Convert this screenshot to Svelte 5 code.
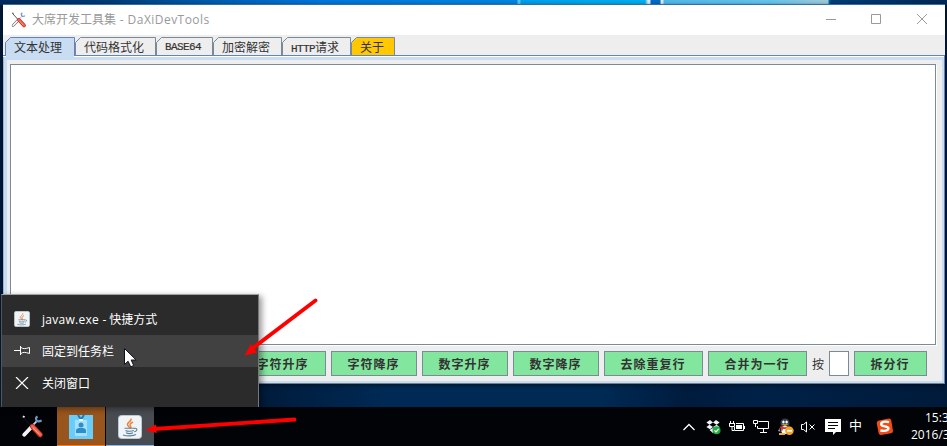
<script>
  const tabs = [
    { label: '文本处理', width: 70, kind: 'selected' },
    { label: '代码格式化', width: 81, kind: '' },
    { label: 'BASE64', width: 57, kind: 'latin' },
    { label: '加密解密', width: 69, kind: '' },
    { label: 'HTTP请求', latin: 'HTTP', rest: '请求', width: 69, kind: '' },
    { label: '关于', width: 44, kind: 'about' }
  ];
  const actions = ['字符升序', '字符降序', '数字升序', '数字降序', '去除重复行', '合并为一行'];
</script>

{#snippet tools(cls)}
  <svg class={cls} viewBox="0 0 24 24">
    <path d="M2 1.5l2 1" stroke="#eee" stroke-width="2" fill="none" class="tip" />
    <path d="M3 3l9 10" stroke="#333" stroke-width="1.3" fill="none" class="shaft" />
    <path d="M3.500 21.500L12.500 12" stroke="#333" stroke-width="4.200" stroke-linecap="round" class="edge" />
    <path d="M3.500 21.500L12.500 12" stroke="#f3f3f3" stroke-width="3" stroke-linecap="round" />
    <path d="M13 11l4-4" stroke="#c5d0dc" stroke-width="2" />
    <path d="M18 1.500c-3 2-1.500 7.500 4.500 4.500" fill="none" stroke="#6f9ac8" stroke-width="2.200" />
    <path d="M12.500 12.500l8.500 9" stroke="#b92c20" stroke-width="5.600" stroke-linecap="round" />
    <path d="M12.500 12.500l8.500 9" stroke="#ee6550" stroke-width="3.600" stroke-linecap="round" />
    <path d="M13 14l7 7" stroke="#ffac98" stroke-width="1" />
  </svg>
{/snippet}

{#snippet java(cls)}
  <svg class={cls} viewBox="0 0 24 24">
    <rect x=".5" y=".5" width="23" height="23" rx="3" fill="#f1f4f6" stroke="#b8cad8" />
    <path d="M13 3.500c1.500 3-5.500 4-3.200 7 .8 1 1.800 1.600 1.800 2.800M15 7c-2.800 1.400-4 2.500-2.400 4.200.8 1 .3 1.700-.3 2.300" fill="none" stroke="#ee8036" stroke-width="1.400" />
    <path d="M6.500 13.200h10M7.500 15.500c1.500 1 6.500 1 8.300 0M8 17.700c2 1 5 1 7 0M5 20c4 1.300 10 1.200 13-.4M16 13.500c4-1.200 3.500 2.800.2 3.200" fill="none" stroke="#5e829c" stroke-width="1.100" />
  </svg>
{/snippet}

<div class="desktop">
  <section class="window">
    <header>
      {@render tools('app-icon')}
      <h1>大席开发工具集 <span>- DaXiDevTools</span></h1>
      <svg class="controls" width="104" height="12" viewBox="0 0 104 12" fill="none" stroke="#999">
        <path d="M0 5.500h10M45.500 .5h9v9h-9zM91 0l10 10M101 0L91 10" />
      </svg>
    </header>
    <nav>
      {#each tabs as tab}
        <div class="tab {tab.kind}" style:width="{tab.width}px">
          <svg class="shape" width={tab.width} height="18" viewBox="0 0 {tab.width} 18">
            <path d="M.5 19V5.500L5.500 .5H{tab.width - 0.5}V19" />
          </svg>
          {#if tab.latin}
            <b><i>{tab.latin}</i>{tab.rest}</b>
          {:else}
            <b>{tab.label}</b>
          {/if}
        </div>
      {/each}
    </nav>
    <main>
      <div class="textarea"></div>
      <div class="actions">
        {#each actions as action}<button class:wide={action.length === 5}>{action}</button>{/each}
        <label>按</label>
        <div class="field"></div>
        <button class="split">拆分行</button>
      </div>
    </main>
  </section>

  <footer>
    <div class="task plain">{@render tools('tool-icon')}</div>
    <div class="task badge">
      <svg width="24" height="24" viewBox="0 0 24 24">
        <path fill="#69cdfc" d="M0 0h24v24H0z" />
        <path d="M9 0l3 4.500L15 0" stroke="#237bad" stroke-width="2" fill="none" />
        <path fill="#a5e1ff" d="M6 5h12v16H6z" />
        <path fill="#f4fbff" d="M10 4h4v2h-4z" />
        <circle cx="12" cy="10" r="2.500" fill="#2d8ec9" />
        <path d="M7 18v-2.500c0-2 2-2.500 5-2.500s5 .5 5 2.500V18z" fill="#2d8ec9" />
      </svg>
    </div>
    <div class="task javatask">{@render java('java-big')}</div>
    <div class="tray">
      <svg width="12" height="16" viewBox="0 0 12 16" fill="none" stroke="#fff" stroke-width="1.300"><path d="M.5 11L6 5.500l5.500 5.500" /></svg>
      <svg width="15" height="16" viewBox="0 0 15 16" class="drop">
        <path fill="#f1f5f8" d="M4 1l3 2.400-3.500 2.300L.4 3.500zM10 1l3.600 2.500-3 2.200L7 3.400zM3.500 5.700L7 8l-3 2.300L.4 8zM10.600 5.700L13.600 8 10 10.300 7 8zM3.500 11L7 9l3.500 2L7 14z" />
        <circle cx="10.500" cy="11.300" r="4" fill="#27ae43" />
        <path d="M8.500 11.300l1.500 1.500 2.700-3" fill="none" stroke="#fff" stroke-width="1.200" />
      </svg>
      <svg width="16" height="16" viewBox="0 0 16 16" class="battery">
        <path d="M1.500 2v2M4.500 2v2M0 4.500h6M.5 5v2.500h5V5M3 8v3.500h2M7 4.500h7.500v7h-9V8M15.500 7v3" fill="none" stroke="#fff" />
        <path fill="#fff" d="M7 6h6v4H7z" />
      </svg>
      <svg width="17" height="16" viewBox="0 0 17 16" class="network">
        <path d="M5.500 3.500h10v7h-11V8M10.500 11v3M7 14.500h7M.5 2.500h4v3h-4zM2.500 6v3" fill="none" stroke="#fff" />
      </svg>
      <svg width="16" height="18" viewBox="0 0 16 18" class="qq">
        <path fill="#a8b2bc" d="M3 8L0 13l4 1z" />
        <ellipse cx="7" cy="11" rx="5.500" ry="5.500" fill="#20252a" />
        <circle cx="7" cy="5" r="4.600" fill="#35404a" />
        <ellipse cx="7" cy="12" rx="3.700" ry="4" fill="#fff" />
        <ellipse cx="5.400" cy="4" rx="1.200" ry="1.500" fill="#fff" /><ellipse cx="8.600" cy="4" rx="1.200" ry="1.500" fill="#fff" />
        <path fill="#f5ae27" d="M3.500 6.300h7L7 8zM1 15h6v2H1z" />
        <path d="M2.500 9c3 1.500 6 1.500 9 0M4 9.500v3" fill="none" stroke="#e2352c" stroke-width="1.700" />
        <circle cx="11.400" cy="12.800" r="4.300" fill="#f6a62c" /><path d="M9 12.800h5" stroke="#fff" stroke-width="1.600" />
      </svg>
      <svg width="15" height="16" viewBox="0 0 15 16" fill="none" stroke="#fff" class="volume">
        <path d="M.5 5.500h2L5.500 3v10l-3-2.500h-2zM8.500 5.500l5 5M13.500 5.500l-5 5" />
      </svg>
      <svg width="16" height="16" viewBox="0 0 16 16" class="note">
        <path fill="#fff" d="M0 0h16v13h-5l-3 3v-3H0z" /><path d="M3 3.500h10M3 6.500h10M3 9.500h7" stroke="#05070c" />
      </svg>
      <span class="ime">中</span>
      <svg width="17" height="17" viewBox="0 0 17 17" class="sogou">
        <path fill="#f24b17" d="M3 2.500L13 .5q2 0 2.300 2L17 13q0 2-2 2.300L5 17q-2 0-2.400-2L.7 5Q.6 3 3 2.500z" />
        <path d="M13 4.200C9 3 5 4 5.200 6.300c.2 2.700 7.200 1.400 7.200 4 0 2.500-4.400 3.200-8 2.100" fill="none" stroke="#fff" stroke-width="2.400" />
      </svg>
      <div class="clock"><span>15:3</span><span>2016/3</span></div>
    </div>
  </footer>

  <aside>
    <div class="item">{@render java('java-small')}<span><em>javaw.exe -</em> 快捷方式</span></div>
    <div class="item hover">
      <svg width="16" height="12" viewBox="0 0 16 12" fill="none" stroke="#fff"><path d="M0 5.500h6M6.500 1v9M7 2.500c2 1.500 4 1.500 8.500 0v6c-4.500-1.500-6.500-1.500-8.500 0" /></svg>
      <span>固定到任务栏</span>
    </div>
    <div class="item">
      <svg width="16" height="12" viewBox="0 0 16 12" fill="none" stroke="#fff" stroke-width="1.200"><path d="M2 0l12 12M14 0L2 12" /></svg>
      <span>关闭窗口</span>
    </div>
  </aside>

  <svg class="overlay" width="947" height="446" viewBox="0 0 947 446">
    <g fill="red" stroke="red">
      <path d="M315.500 300.500L253 348M294.500 419.500L154 429" stroke-width="3.800" stroke-linecap="round" />
      <path stroke="none" d="M244.500 355.500l6.500-11.500 6 8.500zM145 430l11-5.500.8 8.500z" />
    </g>
    <path d="M124.500 348.500v16l3.600-3.300 2.600 5.600 3-1.300-2.500-5.500h5z" fill="#fff" stroke="#101018" />
  </svg>
</div>

<style>
  :global(body) { margin: 0; }
  .desktop {
    position: relative; width: 947px; height: 446px; overflow: hidden;
    font: 12px/16px 'Noto Sans', 'Noto Sans CJK SC', sans-serif;
    background:
      linear-gradient(90deg, #002b5c 0, #003b78 110px, #005cae 210px, #0076dc 320px, #0085e3 517px, #55c5f4 518px 520px, #009fec 521px, #00afef 645px, #d9edf5 648px 650px, #006ac8 651px 660px, #d9edf5 661px 663px, #4eb9ec 664px, #66c4ee 770px, #a0cbdc 828px, #0074a9 829px, #003d78 831px, #002856 947px) 0 0 / 100% 5px no-repeat,
      linear-gradient(90deg, #001a39, #001b3b 260px, #002a55 390px, #002a54 600px, #001b3d 690px, #002147 760px, #001a3a);
  }
  .window {
    position: absolute; left: 3px; top: 4px; width: 942px; height: 380px; box-sizing: border-box;
    display: flex; flex-direction: column; background: #eee; border-top: 1px solid #386f9e;
    box-shadow: 0 1px 4px #0008;
  }
  header { height: 30px; background: #fff; display: flex; align-items: center; flex: none; }
  :global(.app-icon) { width: 15px; height: 15px; margin: -1px 0 0 8px; overflow: visible; }
  header :global(.tip) { stroke: #333; }
  .plain :global(.shaft) { stroke: #0d1015; }
  .plain :global(.edge) { stroke: #f3f3f3; }
  h1 { margin: 0 0 1px 6px; font: 12px/16px 'Noto Sans CJK SC', sans-serif; color: #999; flex: 1; white-space: nowrap; }
  h1 span { font-family: 'Open Sans', sans-serif; letter-spacing: .46px; margin-left: 1px; }
  .controls { margin-right: 15px; margin-top: -1px; }
  nav { display: flex; flex: none; height: 18px; padding: 2px 0 0 2px; }
  .tab { position: relative; height: 18px; color: #333; text-align: left; }
  .shape { position: absolute; inset: 0; fill: #eee; stroke: #7a8a99; }
  .tab b { position: relative; display: block; padding-left: 9px; line-height: 20px; font-weight: 400; font-family: 'Noto Sans CJK SC', sans-serif; white-space: nowrap; }
  .tab.latin b, .tab i { font-family: 'Liberation Mono', monospace; font-style: normal; font-size: 11px; letter-spacing: -.6px; -webkit-text-stroke: .2px #333; }
  .tab.latin b { line-height: 21px; }
  .selected { z-index: 1; }
  .selected .shape { height: 22px; fill: #c8ddf2; stroke: #6382bf; overflow: visible; }
  .selected::after { content: ''; position: absolute; left: 1px; right: 1px; top: 17px; height: 4px; background: #c8ddf2; }
  .selected .shape { height: 18px; overflow: hidden; }
  .about .shape { fill: #ffc800; }
  main {
    flex: 1; box-sizing: border-box; border: solid #6382bf; border-width: 1px 1px 1px 0;
    border-bottom-color: #6d8191;
    box-shadow: inset 0 1px #fff, inset 1px 0 #9db6d5, inset 0 4px #c8ddf2, inset 4px 0 #c8ddf2, inset -2px -2px #c8ddf2;
    padding: 8px 8px 0 7px; display: flex; flex-direction: column;
  }
  .textarea { height: 279px; border: 1px solid #7a8a99; background: #fff; box-shadow: 1px 1px #fff; }
  .actions { display: flex; gap: 5px; margin: 6px 0 0 230px; height: 25px; }
  button {
    width: 86px; height: 25px; padding: 0 1px 0 0; box-sizing: border-box; border: 1px solid #7a8a99; border-radius: 0;
    background: #82e69e; color: #333; font: bold 12px/20px 'Noto Sans CJK SC', sans-serif; letter-spacing: 1px; flex: none;
  }
  .wide { width: 99px; }
  .split { width: 73px; }
  label { width: 12px; line-height: 26px; color: #333; font-family: 'Noto Sans CJK SC', sans-serif; }
  .field { width: 20px; height: 25px; box-sizing: border-box; border: 1px solid #7a8a99; background: #fff; }
  footer { position: absolute; left: 0; right: 0; bottom: 0; height: 39px; background: #010307; display: flex; }
  .task { height: 39px; box-sizing: border-box; width: 48px; display: flex; justify-content: center; padding-top: 8px; margin-right: 1px; }
  .plain { width: 56px; padding-left: 7px; }
  .badge { background: #98551e; border-bottom: 1px solid #ff7b10; }
  .javatask { background: #484b50; border-bottom: 1px solid #83baf0; }
  :global(.tool-icon) { width: 22px; height: 22px; overflow: visible; }
  :global(.java-big) { width: 24px; height: 24px; }
  :global(.java-small) { width: 16px; height: 16px; }
  .tray { display: flex; align-items: center; margin-left: auto; width: 264px; color: #fff; flex: none; }
  .tray svg { flex: none; }
  .drop { margin-left: 11px; }
  .battery { margin-left: 8px; }
  .network { margin-left: 8px; margin-top: -1px; }
  .qq { margin-left: 8px; }
  .volume { margin-left: 7px; }
  .note { margin-left: 9px; margin-top: 1px; }
  .ime { width: 13px; margin: -3px 0 0 8px; font: 400 13px/16px 'Noto Sans CJK SC', sans-serif; }
  .sogou { margin-left: 14px; }
  .clock { display: flex; flex-direction: column; width: 60px; margin-left: 18px; flex: none; font: 12px/17px 'Open Sans', sans-serif; white-space: nowrap; margin-top: -2px; }
  .clock span:first-child { padding-left: 14px; }
  aside {
    position: absolute; left: 1px; top: 294px; width: 258px; height: 113px; box-sizing: border-box;
    border: 1px solid #a0a0a0; border-bottom: 0; border-left-color: #555; border-right-color: #777;
    background: #2b2b2b; color: #fff; padding-top: 8px; box-shadow: 3px 2px 6px #0006;
  }
  .item { display: flex; align-items: center; height: 32px; padding-left: 12px; gap: 12px; font-family: 'Noto Sans CJK SC', sans-serif; }
  .item em { font: 12px/16px 'Open Sans', sans-serif; letter-spacing: .28px; }
  .hover { background: #414141; }
  .overlay { position: absolute; inset: 0; pointer-events: none; }
</style>
